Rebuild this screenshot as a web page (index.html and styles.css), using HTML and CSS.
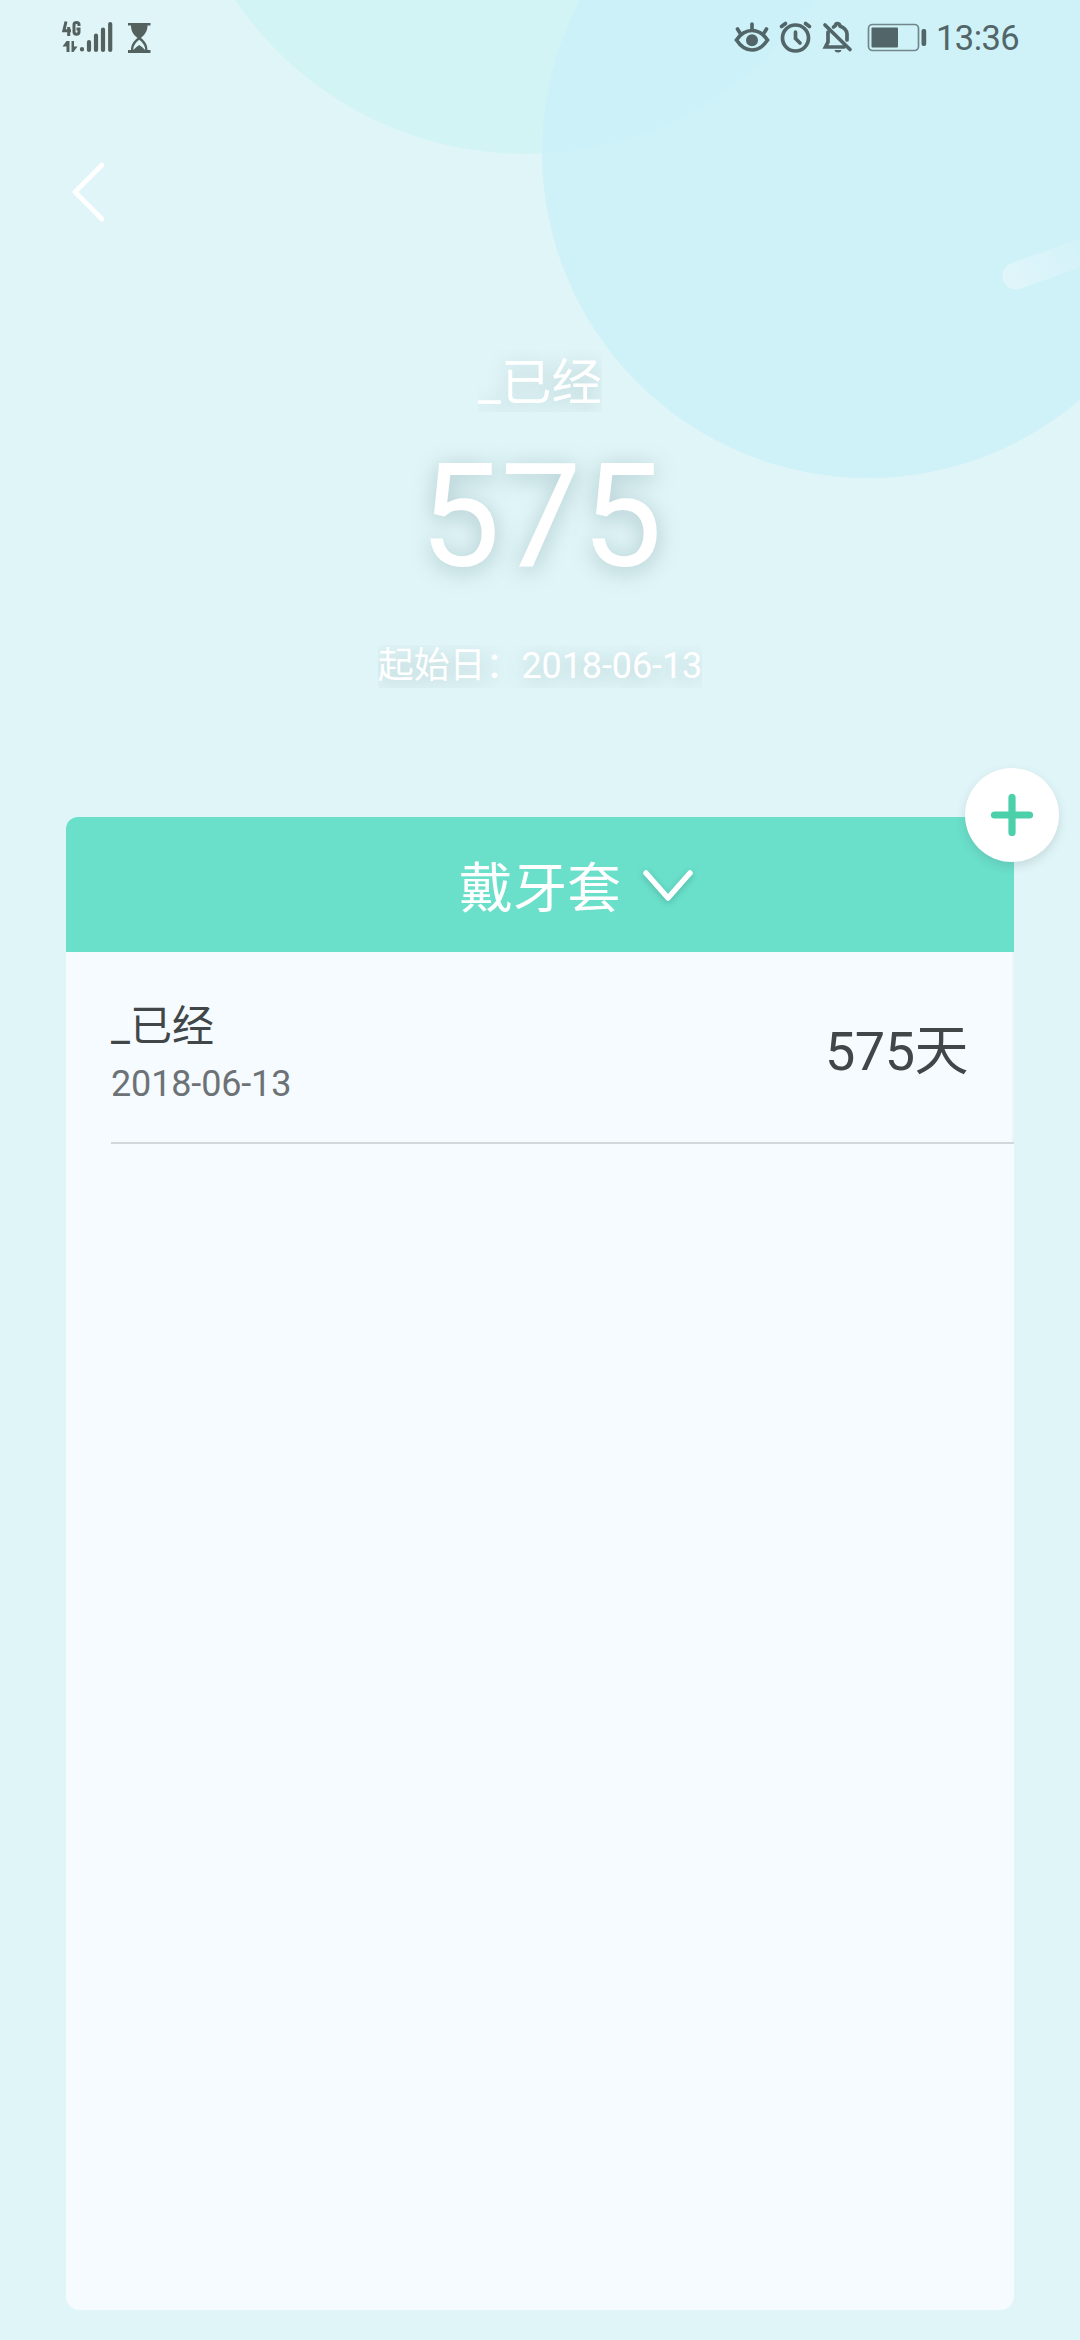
FILE: index.html
```html
<!DOCTYPE html>
<html lang="zh-CN">
<head>
<meta charset="utf-8">
<title>倒数日</title>
<link rel="stylesheet" href="styles.css">
</head>
<body>
<main class="screen">
  <svg class="backdrop" viewBox="0 0 1080 500" aria-hidden="true">
    <defs>
      <linearGradient id="streak" gradientUnits="userSpaceOnUse" x1="1005" y1="278" x2="1100" y2="246">
        <stop offset="0" stop-color="#e0f5fa"/>
        <stop offset="1" stop-color="#e0f5fa" stop-opacity="0.1"/>
      </linearGradient>
    </defs>
    <circle cx="525" cy="-196" r="350" fill="#d3f4f5"/>
    <circle cx="868" cy="152" r="326" fill="#caf0f8" fill-opacity="0.75"/>
    <path d="M1016 276L1110 242" stroke="url(#streak)" stroke-width="27" stroke-linecap="round"/>
  </svg>

  <header class="status">
    <svg class="status-left" viewBox="0 0 96 36" aria-hidden="true">
      <g fill="none" stroke="#54625f" stroke-width="3">
        <path d="M5 1.500L2.800 10.800H10M7.700 7V16"/>
        <path d="M18 6V4.500Q18 2.500 15.500 2.500T13 4.500V12Q13 14.200 15.500 14.200T18 12V9H15.500"/>
      </g>
      <path d="M5.500 21H8.500V32H5.500V26.500H1.500ZM10.500 21H13V26.500H16.500L12.500 32H10.500Z" fill="#54625f"/>
      <g stroke="#54625f" stroke-width="4.200" stroke-linecap="round">
        <path d="M21 29V29.500M28 22V30M35 15.500V30M42 9.500V30M49.200 4V30"/>
      </g>
      <path d="M67 3H89.500V5.500H86.500C86.500 12 83 15 80 18C84.500 21.500 86.500 25 86.500 30H89.500V33H67V30H70C70 25 72 21.500 76.500 18C73 15 70 12 70 5.500H67Z" fill="#54625f"/>
      <path d="M72.300 30C72.300 25.500 75 22.500 78.200 19.800C81.500 22.500 84.200 25.500 84.200 30Q81.500 27 78.200 25Q75 27 72.300 30Z" fill="#e0f5f8"/>
    </svg>
    <div class="status-right">
      <svg class="status-icons" viewBox="0 0 194 36" aria-hidden="true">
        <g fill="none" stroke="#526568" stroke-width="3.700" stroke-linecap="round">
          <path d="M2.500 20Q9 10.500 18 10.500T33.500 20Q27 30 18 30T2.500 20Z"/>
          <path d="M18 4V9M3.500 9L6 13M32.500 9L30 13"/>
          <circle cx="61.500" cy="18" r="13"/>
          <path d="M61.500 12V18.500L66 23M47.500 6.500L51.500 3.500M75.500 6.500L71.500 3.500"/>
          <path d="M91 5L116 29.500"/>
          <path d="M94 12V22L91.500 27H110M99.500 7Q101 6 101.500 5.500Q101.500 3.500 103.500 3.500T106 6Q113 9 113 14V20"/>
        </g>
        <circle cx="18" cy="20.200" r="6" fill="#526568"/>
        <path d="M100.500 30H107.500Q107 32.500 104 32.500T100.500 30Z" fill="#526568"/>
        <rect x="134.500" y="4.500" width="50" height="26" rx="4" fill="none" stroke="#72878b" stroke-width="1.700"/>
        <rect x="137.500" y="7.500" width="26.500" height="20" rx="1" fill="#526568"/>
        <rect x="187.500" y="9" width="4.700" height="17" rx="2" fill="#526568"/>
      </svg>
      <span class="clock">13:36</span>
    </div>
  </header>

  <nav class="nav">
    <svg class="back" viewBox="0 0 36 62" aria-label="返回">
      <path d="M31 4L4 31L31 58" fill="none" stroke="#fff" stroke-width="4.800" stroke-linecap="round" stroke-linejoin="round"/>
    </svg>
  </nav>

  <section class="hero">
    <h1 class="hero-title">_已经</h1>
    <div class="hero-days">575</div>
    <div class="hero-date">起始日：2018-06-13</div>
  </section>

  <section class="panel">
    <header class="panel-head">
      <span></span>
      <h2 class="panel-title">戴牙套</h2>
      <svg class="chevron" viewBox="0 0 56 40" aria-hidden="true">
        <path d="M6 6L28 31L50 6" fill="none" stroke="#fff" stroke-width="5.500" stroke-linecap="round" stroke-linejoin="round"/>
      </svg>
    </header>
    <div class="row-wrap">
      <article class="row">
        <div>
          <div class="row-title">_已经</div>
          <div class="row-date">2018-06-13</div>
        </div>
        <div class="row-days">575天</div>
      </article>
    </div>
    <button class="add" aria-label="添加">
      <svg viewBox="0 0 42 42" aria-hidden="true">
        <path d="M21 3.500V38.500M3.500 21H38.500" stroke="#4bd0aa" stroke-width="7.200" stroke-linecap="round"/>
      </svg>
    </button>
  </section>
</main>
</body>
</html>
```
FILE: styles.css
```css
* {
  box-sizing: border-box;
  margin: 0;
}

body {
  font-family: Roboto, "Noto Sans CJK SC", sans-serif;
  font-weight: 400;
  background: #e0f5f8;
}

.screen {
  position: relative;
  display: flex;
  flex-direction: column;
  width: 1080px;
  height: 2340px;
  overflow: hidden;
  isolation: isolate;
}

.backdrop {
  position: absolute;
  z-index: -1;
  top: 0;
  left: 0;
  width: 1080px;
  height: 500px;
}

.status {
  display: flex;
  justify-content: space-between;
  height: 76px;
  padding: 20px 61px 0 61px;
}

.status-left {
  width: 96px;
  height: 36px;
}

.status-right {
  display: flex;
  gap: 8px;
}

.status-icons {
  width: 194px;
  height: 36px;
}

.clock {
  font-size: 34.5px;
  line-height: 37px;
  letter-spacing: -0.6px;
  color: #526568;
}

.nav {
  height: 274px;
  padding: 85px 0 0 71px;
}

.back {
  display: block;
  width: 36px;
  height: 62px;
}

.hero {
  display: flex;
  flex-direction: column;
  align-items: center;
  height: 467px;
  color: #fff;
}

.hero-title {
  height: 62px;
  overflow: clip;
  font-size: 50.5px;
  font-weight: 400;
  line-height: 65px;
  text-shadow: 0 4px 20px rgba(70, 110, 110, 0.3);
}

.hero-days {
  margin-top: 21px;
  padding-left: 2px;
  font-size: 144px;
  line-height: 168px;
  text-shadow: 0 4px 22px rgba(70, 110, 110, 0.35);
}

.hero-date {
  margin-top: 44px;
  overflow: clip;
  font-size: 36px;
  line-height: 43px;
  letter-spacing: -0.1px;
  text-shadow: 0 4px 20px rgba(70, 110, 110, 0.3);
}

.panel {
  position: relative;
  width: 948px;
  height: 1493px;
  margin: 0 66px;
  border-radius: 14px;
  background: #f5fbfe;
}

.panel-head {
  display: grid;
  grid-template-columns: 1fr auto 1fr;
  align-items: center;
  column-gap: 19px;
  height: 135px;
  border-radius: 12px 12px 0 0;
  background: #6adfca;
  color: #fff;
}

.panel-title {
  padding-top: 11px;
  font-size: 54px;
  font-weight: 400;
  line-height: 70px;
}

.chevron {
  width: 56px;
  height: 40px;
  margin-top: 4px;
  filter: drop-shadow(0 2px 3px rgba(40, 130, 110, 0.4));
}

.row-wrap {
  padding-left: 45px;
  background: linear-gradient(#edf5f7, #edf5f7) right top / 2px 190px no-repeat;
}

.row {
  display: flex;
  justify-content: space-between;
  height: 192px;
  padding: 47px 46px 0 0;
  border-bottom: 2px solid #d0d8dc;
}

.row-title {
  font-size: 42px;
  line-height: 56px;
  color: #414649;
}

.row-date {
  margin-top: 8px;
  font-size: 36px;
  line-height: 42px;
  letter-spacing: -0.15px;
  color: #6c7275;
}

.row-days {
  padding-top: 21px;
  font-size: 54px;
  line-height: 64px;
  letter-spacing: -0.5px;
  color: #414649;
}

.add {
  position: absolute;
  top: -49px;
  right: -45px;
  display: flex;
  align-items: center;
  justify-content: center;
  width: 94px;
  height: 94px;
  padding: 0;
  border: 0;
  border-radius: 50%;
  background: #fff;
  box-shadow: 0 4px 10px rgba(70, 90, 95, 0.17);
}

.add svg {
  width: 42px;
  height: 42px;
}
```
